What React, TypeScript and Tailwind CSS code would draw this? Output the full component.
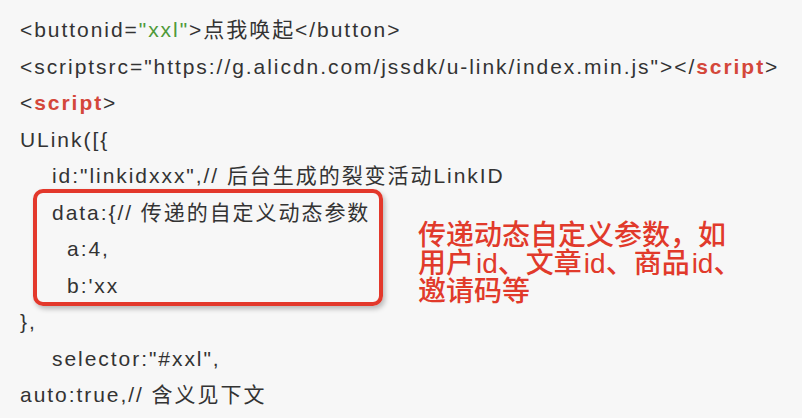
import React from 'react';

const Line = ({ indent = 0, children }: { indent?: number; children: React.ReactNode }) => {
  const pad = indent === 2 ? 'pl-[47px]' : indent === 1 ? 'pl-[32px]' : 'pl-0';
  return <div className={`h-[36.5px] whitespace-nowrap leading-[36.5px] ${pad}`}>{children}</div>;
};

const Tag = ({ children }: { children: React.ReactNode }) => (
  <span className="font-semibold text-[#d4473a]">{children}</span>
);

const Id = () => <span className="ml-[2px] font-normal">id</span>;

const App = () => {
  return (
    <div className="h-[418px] w-[802px] overflow-hidden bg-[#f7f7f7]">
      <div
        className="pl-[20px] pt-[12px] text-[21px] tracking-[1.95px] text-[#333333]"
        style={{ fontFamily: '"Liberation Sans", "Noto Sans CJK SC", sans-serif' }}
      >
        <Line>
          &lt;buttonid=<span className="text-[#4f9a3a]">"xxl"</span>&gt;点我唤起&lt;/button&gt;
        </Line>
        <Line>
          &lt;scriptsrc="https://g.alicdn.com/jssdk/u-link/index.min.js"&gt;&lt;/<Tag>script</Tag>&gt;
        </Line>
        <Line>
          &lt;<Tag>script</Tag>&gt;
        </Line>
        <Line>ULink([{'{'}</Line>
        <Line indent={1}>id:"linkidxxx",// 后台生成的裂变活动LinkID</Line>

        <div className="relative">
          <Line indent={1}>data:{'{'}// 传递的自定义动态参数</Line>
          <Line indent={2}>a:4,</Line>
          <Line indent={2}>b:'xx</Line>
          <div className="pointer-events-none absolute bottom-[-2px] left-[13px] top-[-6px] w-[350px] rounded-[10px] border-[4px] border-[#e3382b] shadow-[2px_3px_5px_rgba(0,0,0,0.25)]" />
          <div className="absolute left-[398px] top-[27px] text-[28px] font-medium leading-[28px] tracking-normal text-[#e13a2b]">
            <div>传递动态自定义参数，如</div>
            <div>
              用户<Id />、文章<Id />、商品<Id />、
            </div>
            <div>邀请码等</div>
          </div>
        </div>

        <Line>{'}'},</Line>
        <Line indent={1}>selector:"#xxl",</Line>
        <Line>auto:true,// 含义见下文</Line>
      </div>
    </div>
  );
};

export default App;
